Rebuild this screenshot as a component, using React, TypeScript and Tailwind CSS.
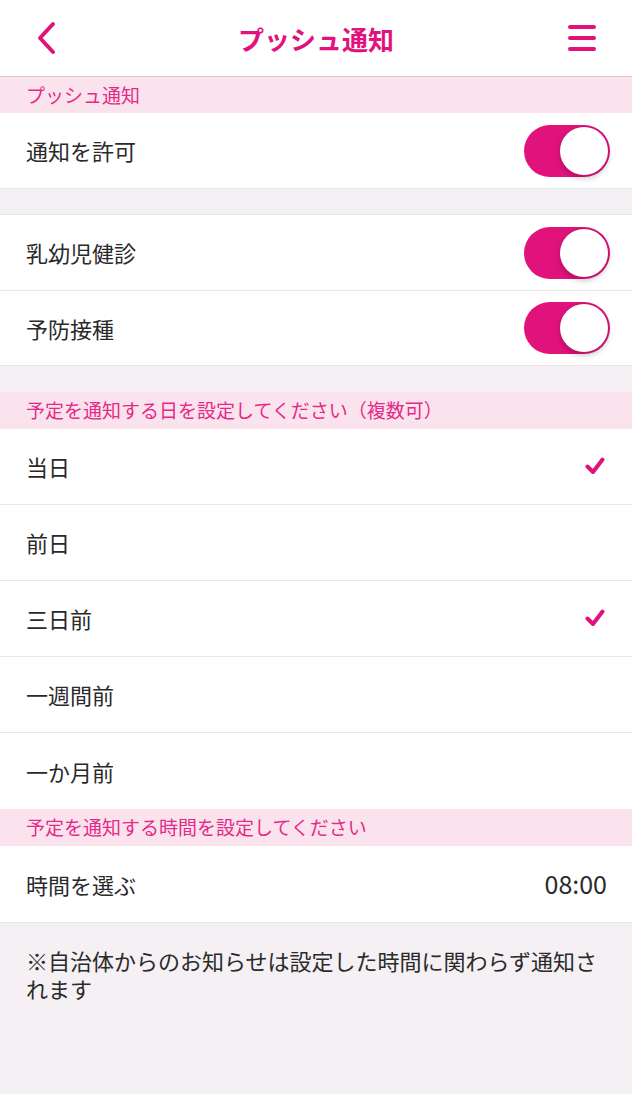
import React from "react";

const font = { fontFamily: '"Noto Sans CJK JP", "Noto Sans", sans-serif' };

function Toggle() {
  return (
    <div className="relative w-[86px] h-[52px] rounded-full bg-[#e2127d]">
      <div className="absolute right-[2px] top-[2px] w-[48px] h-[48px] rounded-full bg-white shadow-[0_3px_6px_rgba(0,0,0,0.25)] ring-1 ring-[#c9126e]" />
    </div>
  );
}

function Check() {
  return (
    <svg width="20" height="19" viewBox="0 0 20 19" fill="none">
      <path d="M2.5 9.5 L8 15 L17.5 2.5" stroke="#e2127d" strokeWidth="4" strokeLinecap="round" strokeLinejoin="round" />
    </svg>
  );
}

function SectionHeader({ children, h }: { children: React.ReactNode; h: string }) {
  return (
    <div className={`${h} bg-[#fae3ec] flex items-center pl-[26px] text-[19px] text-[#e6288a]`}>
      {children}
    </div>
  );
}

function Row({ label, right, border = true, h = "h-[76px]", pr = "pr-[22px]" }: { label: string; right?: React.ReactNode; border?: boolean; h?: string; pr?: string }) {
  return (
    <div className={`${h} bg-white flex items-center justify-between pl-[26px] ${pr} ${border ? "border-b border-[#e8e8e8]" : ""}`}>
      <span className="text-[22px] text-[#2a2a2a]">{label}</span>
      {right}
    </div>
  );
}

export default function App() {
  return (
    <div style={font} className="w-[632px] min-h-[1094px] bg-[#f5f0f4] flex flex-col">
      <div className="h-[77px] bg-white border-b border-[#d3c9ce] flex items-center justify-between px-[30px]">
        <svg width="24" height="34" viewBox="0 0 24 34" fill="none" className="ml-[4px]">
          <path d="M19 3 L6 17 L19 31" stroke="#e2127d" strokeWidth="4" strokeLinecap="round" strokeLinejoin="round" />
        </svg>
        <span className="text-[26px] font-bold text-[#e2127d] ml-[6px]">プッシュ通知</span>
        <svg width="28" height="28" viewBox="0 0 28 28" fill="none" className="mr-[6px]">
          <path d="M2 3 H26 M2 14 H26 M2 25 H26" stroke="#e2127d" strokeWidth="4" strokeLinecap="round" />
        </svg>
      </div>

      <SectionHeader h="h-[36px]">プッシュ通知</SectionHeader>
      <Row label="通知を許可" right={<Toggle />} border={false} h="h-[75px]" />
      <div className="h-[27px] border-y border-[#e8e8e8] bg-[#f5f0f4]" />
      <Row label="乳幼児健診" right={<Toggle />} />
      <Row label="予防接種" right={<Toggle />} h="h-[75px]" />
      <div className="h-[26px] bg-[#f5f0f4]" />

      <SectionHeader h="h-[37px]">予定を通知する日を設定してください（複数可）</SectionHeader>
      <Row label="当日" right={<Check />} pr="pr-[27px]" />
      <Row label="前日" />
      <Row label="三日前" right={<Check />} pr="pr-[27px]" />
      <Row label="一週間前" />
      <Row label="一か月前" border={false} />

      <SectionHeader h="h-[37px]">予定を通知する時間を設定してください</SectionHeader>
      <div className="h-[77px] bg-white flex items-center justify-between pl-[26px] pr-[25px] border-b border-[#e8e8e8]">
        <span className="text-[22px] text-[#2a2a2a]">時間を選ぶ</span>
        <span className="text-[25px] text-[#2a2a2a]">08:00</span>
      </div>

      <div className="pl-[26px] pr-[30px] pt-[23px] text-[22px] leading-[28px] text-[#2a2a2a]">
        ※自治体からのお知らせは設定した時間に関わらず通知されます
      </div>
    </div>
  );
}
